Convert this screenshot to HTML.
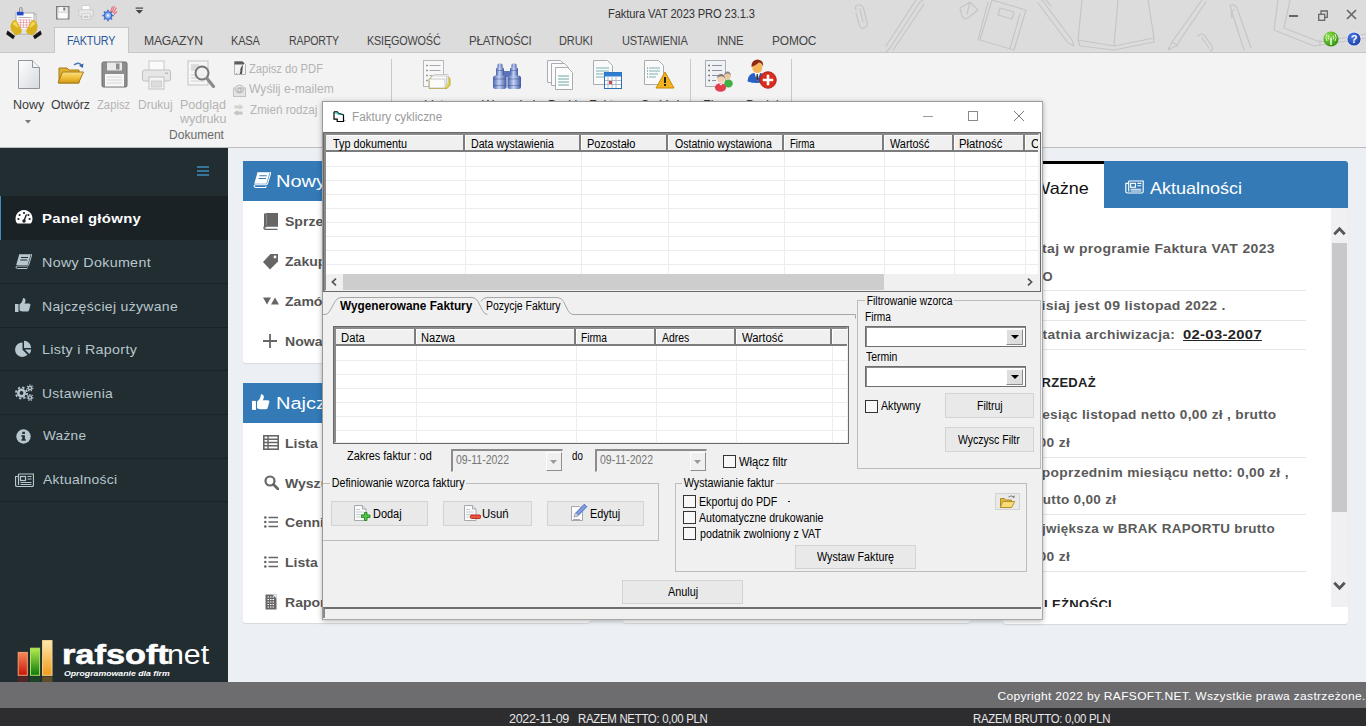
<!DOCTYPE html>
<html><head><meta charset="utf-8">
<style>
html,body{margin:0;padding:0;}
body{width:1366px;height:726px;overflow:hidden;position:relative;background:#ecf0f5;font-family:"Liberation Sans",sans-serif;}
.a{position:absolute;white-space:nowrap;}
/* ribbon */
#top{left:0;top:0;width:1366px;height:52px;background:#dcdcdc;}
#rib{left:0;top:52px;width:1366px;height:96px;background:#f3f3f3;border-top:1px solid #c6c6c6;border-bottom:1px solid #bdbdbd;box-sizing:border-box;}
.mt{top:34px;font-size:12.5px;color:#444;letter-spacing:-0.2px;line-height:14px;}
.rl{font-size:12.5px;color:#3a3a3a;line-height:14px;text-align:center;}
.dis{color:#b4b4b4;}
/* sidebar */
#side{left:0;top:148px;width:228px;height:534px;background:#222d32;}
.si{left:0;width:228px;height:44px;border-bottom:1px solid #1c2529;box-sizing:border-box;}
.st{font-size:13.5px;color:#b8c7ce;line-height:16px;letter-spacing:0.3px;}
/* panels */
.ph{background:#337ab7;}
.pb{background:#fff;border-radius:0 0 3px 3px;box-shadow:0 1px 1px rgba(0,0,0,.1);}
.pt{font-size:12px;font-weight:bold;color:#555;line-height:16px;transform:scaleX(1.17);transform-origin:0 0;}
.rt{font-size:13px;font-weight:bold;color:#5a5a5a;letter-spacing:0.3px;line-height:16px;text-align:right;}
.hr{height:1px;background:#e6e6e6;left:1000px;width:306px;}
/* footer */
#foot{left:0;top:682px;width:1366px;height:26px;background:#6d6d70;}
#stat{left:0;top:708px;width:1366px;height:18px;background:#2d2d30;}
/* dialog */
#dlg{left:322px;top:101px;width:721px;height:518.500px;background:#f0f0f0;box-shadow:0 1px 5px rgba(0,0,0,.30);}
.d{font-size:12px;color:#000;line-height:13px;}
.btn{background:#e9e9e9;border:1px solid #d3d3d3;box-sizing:border-box;text-align:center;}
.cb{width:13px;height:13px;background:#f8f8f8;border:1px solid #333;box-sizing:border-box;}
.gb{border:1px solid #bdbdbd;box-sizing:border-box;}
.gl{background:#f0f0f0;padding:0 2px;}
.hc{top:0;height:16px;background:#f0f0f0;border-right:2px solid #8c8c8c;box-sizing:border-box;box-shadow:inset 1px 1px 0 #fff;}
</style></head><body>
<!--TOP-->

<div class="a" id="top">
 <!-- sketch decoration -->
 <svg class="a" style="left:820px;top:0" width="546" height="52" viewBox="0 0 546 52" fill="none" stroke="#c6c6c6" stroke-width="1.200" stroke-linecap="round" stroke-linejoin="round">
  <path d="M36 10 q-2-5 3-5 q4 0 5 5 l3 12 q1 5-3 6 q-4 1-5-4 l-3-11 M40 9 l3 13"/>
  <path d="M100 2 l-30 46 l-4 4 M96 0 l-30 46 M104 4 l-31 46 M100 2 l3-2"/>
  <path d="M140 8 l10-6 l8 8 l-10 8 q-4 2-6-2 z M150 2 l-3 12"/>
  <path d="M172 0 l34 10 l-12 40 l-34-10 z M168 2 l-10 38 M180 8 l14 4 l-2 7 l-14-4 z M200 14 l-10 34"/>
  <path d="M222 0 l30 40 l2 6 l-6-3 l-30-40 M226 0 l5 6"/>
  <path d="M262 0 l-4 40 l36 6 l40-8 l-6-38 M298 0 l-4 46 M258 40 l2 6 l34 4 l40-8 l0-4"/>
  <path d="M382 0 l-30 42 l-4 8 l8-4 l30-44 M352 42 l6 4"/>
  <path d="M378 36 q4-4 7 0 l7 10 q2 4-2 5 M382 38 l7 10"/>
  <path d="M410 6 q4-3 7 2 l14 40 M410 6 l14 44 M414 10 q-4 2-2 8"/>
  <path d="M458 0 l-4 30 l40 16 l52-8 M470 0 l-6 28 l36 14 l46-8 M500 46 l0-6"/>
 </svg>
 <!-- app icon -->
 <svg class="a" style="left:6px;top:6px" width="36" height="34" viewBox="0 0 36 34">
  <rect x="12.500" y="8" width="17.500" height="19" fill="#f0f0f0" stroke="#a8a8a8" stroke-width=".8"/>
  <rect x="10" y="7" width="18" height="21" fill="#fcfcfc" stroke="#9c9c9c" stroke-width=".8"/>
  <path d="M13.500 5.800v-3q0-1.300 1.300-1.300t1.300 1.300v3" fill="none" stroke="#8a8a8a" stroke-width="1"/>
  <rect x="11" y="5.800" width="6.500" height="3.600" fill="#2346cf"/>
  <path d="M12.500 11.500h13" stroke="#aaa" stroke-width=".9"/>
  <path d="M12 14h14M12 16.500h14M12 19h14M12 21.500h14M14.500 13.500v8.500M17.500 13.500v8.500M20.500 13.500v8.500M23.500 13.500v8.500" stroke="#e59aa8" stroke-width=".7"/>
  <path d="M12 24h14M12 26h10" stroke="#bbb" stroke-width=".8"/>
  <path d="M5 24q-1.500-6 2-9q2.500-2 4 .5l4.500 8q1 3-2 4.500l-4 1.500z" fill="#d9b11c"/>
  <path d="M6.500 18q1.500-3 3.500-2l3 6q-3-1-6.500-4z" fill="#f2d65a"/>
  <path d="M31 24q1.500-6-2-9q-2.500-2-4 .5l-4.500 8q-1 3 2 4.500l4 1.500z" fill="#d9b11c"/>
  <path d="M29.500 18q-1.500-3-3.500-2l-3 6q3-1 6.500-4z" fill="#f2d65a"/>
  <path d="M1.500 24.500l7.500 5.500-1.800 3.200-7-5z" fill="#141414"/>
  <path d="M34.500 24.500l-7.500 5.500 1.800 3.200 7-5z" fill="#141414"/>
 </svg>
 <!-- quick access -->
 <svg class="a" style="left:55.500px;top:6px" width="14" height="14" viewBox="0 0 14 14"><rect x=".6" y=".6" width="12.300" height="12.300" fill="#dcdcdc" stroke="#7d7d7d" stroke-width="1.200"/><rect x="3" y="1" width="7.500" height="4.500" fill="#f6f6f6"/><rect x="7.300" y="1.500" width="2" height="3" fill="#7d7d7d"/><rect x="2.300" y="7" width="9" height="5.500" fill="#fafafa"/></svg>
 <svg class="a" style="left:78px;top:5px" width="16" height="15" viewBox="0 0 16 15"><rect x="4" y=".6" width="8" height="5" fill="#fdfdfd" stroke="#c9c9c9" stroke-width=".8"/><rect x=".8" y="4.800" width="14.400" height="6.500" rx="1.300" fill="#e9e9e9" stroke="#c2c2c2" stroke-width=".8"/><rect x="4" y="8.800" width="8" height="5.400" fill="#fbfbfb" stroke="#c2c2c2" stroke-width=".8"/><rect x="5.500" y="10.500" width="5" height="2.500" fill="#c9c9c9"/></svg>
 <svg class="a" style="left:102px;top:5px" width="16" height="17" viewBox="0 0 16 17"><circle cx="6" cy="10.500" r="3.600" fill="#8fb4ee" stroke="#3d6fd0" stroke-width="1.400"/><path d="M6 4.800v2M6 14.200v2M.3 10.500h2M9.700 10.500h2M2 6.500l1.400 1.400M8.600 13.100l1.400 1.400M10 6.500l-1.400 1.400M3.400 13.100l-1.400 1.400" stroke="#3d6fd0" stroke-width="1.600"/><circle cx="6" cy="10.500" r="1.300" fill="#e8eefc"/><path d="M8.500 7l2-5.500M10 7.500l2.500-6.500M11.500 8l3-5.500M12 9.500l3-3" stroke="#ee6a7c" stroke-width="1.100"/></svg>
 <svg class="a" style="left:135px;top:7px" width="9" height="8" viewBox="0 0 9 8"><rect x=".6" y=".5" width="7.500" height="1.200" fill="#444"/><path d="M.8 3h7.200L4.400 6.800z" fill="#444"/></svg>
 <div class="a" style="left:608.4px;top:7px;font-size:12px;color:#333;line-height:14px;letter-spacing:-0.12px;transform:scaleX(0.9287);transform-origin:0 0" id="ttl">Faktura VAT 2023 PRO 23.1.3</div>
 <!-- window controls -->
 <div class="a" style="left:1289px;top:14.800px;width:9px;height:2px;background:#666"></div>
 <svg class="a" style="left:1318px;top:10px" width="10" height="11" viewBox="0 0 10 11" fill="none" stroke="#666" stroke-width="1.300"><rect x=".7" y="4.300" width="6" height="6"/><path d="M3 4V1h6.300v6.300H7"/></svg>
 <svg class="a" style="left:1346px;top:8.500px" width="11" height="11" viewBox="0 0 11 11" stroke="#666" stroke-width="1.600"><path d="M1 1l9 9M10 1l-9 9"/></svg>
 <!-- tab -->
 
 <div class="a mt" style="left:143.7px;transform:scaleX(0.9729);transform-origin:0 0" id="m1">MAGAZYN</div>
 <div class="a mt" style="left:230.5px;transform:scaleX(0.8812);transform-origin:0 0" id="m2">KASA</div>
 <div class="a mt" style="left:288.5px;transform:scaleX(0.8483);transform-origin:0 0" id="m3">RAPORTY</div>
 <div class="a mt" style="left:367.4px;transform:scaleX(0.8675);transform-origin:0 0" id="m4">KSIĘGOWOŚĆ</div>
 <div class="a mt" style="left:469.1px;transform:scaleX(0.9182);transform-origin:0 0" id="m5">PŁATNOŚCI</div>
 <div class="a mt" style="left:559.3px;transform:scaleX(0.8861);transform-origin:0 0" id="m6">DRUKI</div>
 <div class="a mt" style="left:622.2px;transform:scaleX(0.8822);transform-origin:0 0" id="m7">USTAWIENIA</div>
 <div class="a mt" style="left:717.1px;transform:scaleX(0.9107);transform-origin:0 0" id="m8">INNE</div>
 <div class="a mt" style="left:772.4px;transform:scaleX(0.9556);transform-origin:0 0" id="m9">POMOC</div>
 <!-- green / help icons -->
 <svg class="a" style="left:1323px;top:31px" width="16" height="16" viewBox="0 0 16 16"><defs><radialGradient id="gg" cx=".35" cy=".3" r=".8"><stop offset="0" stop-color="#8ee04a"/><stop offset="1" stop-color="#2c8a10"/></radialGradient><radialGradient id="gh" cx=".35" cy=".3" r=".8"><stop offset="0" stop-color="#4a78e0"/><stop offset="1" stop-color="#1c3ea8"/></radialGradient></defs><circle cx="8" cy="8" r="7.600" fill="url(#gg)"/><path d="M8 14V6.500" stroke="#eaffd8" stroke-width="1.500"/><path d="M5.800 8.500q-1.200-2 0-4M10.200 8.500q1.200-2 0-4M4 10q-2.200-3.500 0-7M12 10q2.200-3.500 0-7" stroke="#dcf7c4" stroke-width="1" fill="none"/></svg>
 <svg class="a" style="left:1346px;top:31px" width="16" height="16" viewBox="0 0 16 16"><circle cx="8" cy="8" r="7.600" fill="#e8ecf8"/><circle cx="8" cy="8" r="6.600" fill="url(#gh)"/><text x="8" y="12" font-family="Liberation Sans" font-weight="bold" font-size="11" fill="#fff" text-anchor="middle">?</text></svg>
</div>


<div class="a" id="rib">
 <!-- Nowy -->
 <svg class="a" style="left:17px;top:6px" width="24" height="31" viewBox="0 0 24 31"><defs><linearGradient id="gp" x1="0" y1="0" x2="1" y2="1"><stop offset="0" stop-color="#ffffff"/><stop offset="1" stop-color="#d5d9de"/></linearGradient></defs><path d="M1.5 1.5h14l7 7v21h-21z" fill="url(#gp)" stroke="#8f959b"/><path d="M15.5 1.5v7h7" fill="#f4f4f4" stroke="#8f959b"/></svg>
 <div class="a rl" style="left:13.0px;top:45px;" id="r0">Nowy</div>
 <svg class="a" style="left:25px;top:67px" width="6" height="4" viewBox="0 0 6 4"><path d="M0 0h6l-3 3.5z" fill="#777"/></svg>
 <!-- Otworz -->
 <svg class="a" style="left:57px;top:7px" width="28" height="26" viewBox="0 0 28 26"><defs><linearGradient id="gf" x1="0" y1="0" x2="0" y2="1"><stop offset="0" stop-color="#fbe089"/><stop offset=".5" stop-color="#f1c13c"/><stop offset="1" stop-color="#d39a1a"/></linearGradient></defs><path d="M2 8h8l2 2h10v13H2z" fill="#e0b030" stroke="#a67c14"/><path d="M1 23l4.500-11h21l-5 11z" fill="url(#gf)" stroke="#a67c14"/><path d="M17 5q5-4 8 1" fill="none" stroke="#4a78b8" stroke-width="1.600"/><path d="M26.500 3.500l-.7 4.500-3.800-2.200z" fill="#3a64a8"/></svg>
 <div class="a rl" style="left:51.4px;top:45px;transform:scaleX(0.9856);transform-origin:0 0" id="r1">Otwórz</div>
 <!-- Zapisz -->
 <svg class="a" style="left:101px;top:8px" width="27" height="27" viewBox="0 0 27 27"><rect x="1" y="1" width="25" height="25" rx="1.5" fill="#8d8d8d" stroke="#6f6f6f"/><rect x="6" y="1.5" width="15" height="8" fill="#e9e9e9"/><rect x="15" y="2.5" width="3.5" height="6" fill="#8d8d8d"/><rect x="4" y="13" width="19" height="12.5" fill="#f7f7f7"/><path d="M6 16h15M6 19h15M6 22h15" stroke="#d6d6d6"/></svg>
 <div class="a rl dis" style="left:97.4px;top:45px;transform:scaleX(0.9000);transform-origin:0 0" id="r2">Zapisz</div>
 <!-- Drukuj -->
 <svg class="a" style="left:141px;top:7px" width="31" height="30" viewBox="0 0 31 30"><rect x="8" y="1" width="15" height="10" fill="#fafafa" stroke="#c8c8c8"/><rect x="1.5" y="10" width="28" height="11" rx="2" fill="#e6e6e6" stroke="#c0c0c0"/><rect x="8" y="17" width="15" height="12" fill="#f4f4f4" stroke="#c0c0c0"/><rect x="10.5" y="21" width="10" height="6" fill="#ddd" stroke="#bbb" stroke-width=".6"/><rect x="24" y="12.5" width="3" height="1.5" fill="#bbb"/></svg>
 <div class="a rl dis" style="left:138.1px;top:45px;transform:scaleX(0.9600);transform-origin:0 0" id="r3">Drukuj</div>
 <!-- Podglad -->
 <svg class="a" style="left:187px;top:7px" width="29" height="30" viewBox="0 0 29 30"><rect x="1" y="1" width="20" height="24" fill="#f6f6f6" stroke="#c4c4c4"/><rect x="4" y="4" width="8" height="7" fill="#dcdcdc"/><path d="M4 15h14M4 18h14M4 21h14" stroke="#d0d0d0"/><circle cx="15" cy="13" r="6.5" fill="#f1f1f1" fill-opacity=".8" stroke="#777" stroke-width="2"/><path d="M20 18.5l6.5 8" stroke="#8a8a8a" stroke-width="3.2" stroke-linecap="round"/></svg>
 <div class="a rl dis" style="left:180px;top:45px;width:44px;" id="r4">Podgląd<br>wydruku</div>
 <div class="a rl" style="left:169.3px;top:75px;color:#6a6a6a;transform:scaleX(0.9643);transform-origin:0 0" id="r5">Dokument</div>
 <!-- small buttons -->
 <svg class="a" style="left:233.500px;top:8px" width="12" height="14" viewBox="0 0 12 14"><path d="M.5.500h8l3 3v10h-11z" fill="#f4f4f4" stroke="#b5b5b5"/><path d="M.5.500h8l1.500 1.500v1.500h-9.500z" fill="#5c5c5c"/><path d="M1 13q4.500-1.500 6-6.500q.5-2 2-2.500q-.5 5-1 9h-2.500q1-2.500 1-4.500q-2 3.500-5.500 4.500z" fill="#555"/></svg>
 <div class="a rl dis" style="left:249.4px;top:9px;transform:scaleX(0.8951);transform-origin:0 0" id="s0">Zapisz do PDF</div>
 <svg class="a" style="left:232.500px;top:30.500px" width="13" height="13" viewBox="0 0 13 13"><rect x=".5" y="4" width="12" height="8.5" fill="#e4e4e4" stroke="#c2c2c2"/><circle cx="6.5" cy="5" r="4" fill="#ececec" stroke="#bbb"/><text x="6.5" y="7.5" font-size="6.5" font-family="Liberation Sans" fill="#999" text-anchor="middle">@</text></svg>
 <div class="a rl dis" style="left:249.4px;top:29px;transform:scaleX(0.9701);transform-origin:0 0" id="s1">Wyślij e-mailem</div>
 <svg class="a" style="left:233px;top:51px" width="11" height="12" viewBox="0 0 11 12"><path d="M1.500 1.500h5V0l4 3-4 3V4.500h-5z" fill="#d2d2d2"/><path d="M9.500 7.500h-5V6l-4 3 4 3v-1.500h5z" fill="#c4c4c4"/></svg>
 <div class="a rl dis" style="left:249.6px;top:49.5px;transform:scaleX(0.9333);transform-origin:0 0" id="s2">Zmień rodzaj</div>
 <div class="a" style="left:391px;top:6px;width:1px;height:82px;background:#c9c9c9"></div>
 <!-- list icon -->
 <svg class="a" style="left:421px;top:6px" width="31" height="32" viewBox="0 0 31 32"><rect x="2.500" y="1.500" width="20" height="26" fill="#f8f8f8" stroke="#b4b8bd"/><path d="M8.500 6.500h11M8.500 11.500h11M8.500 16.500h6" stroke="#a4aab0"/><path d="M5.500 6.500h1M5.500 11.500h1M5.500 16.500h1M5.500 21.500h1" stroke="#444" stroke-width="1.300"/>
 <path d="M8 29.500v-9l3-3.500h15l3 2.500v6.500l-3 3.500z" fill="#e3d64e" stroke="#b5a52e" stroke-width=".9"/><path d="M11 17.500l2-2h14v9" fill="#fafafa" stroke="#c2c2c2" stroke-width=".8"/><path d="M9.500 19l2-2h14v9l-2 2" fill="#fdfdfd" stroke="#c2c2c2" stroke-width=".8"/><rect x="8.500" y="20" width="15.500" height="9" fill="#fbfbfb" stroke="#bdbdbd" stroke-width=".8"/></svg>
 <!-- binoculars -->
 <svg class="a" style="left:492px;top:10px" width="30" height="27" viewBox="0 0 30 27"><defs><linearGradient id="gb" x1="0" y1="0" x2="1" y2="0"><stop offset="0" stop-color="#4862ac"/><stop offset=".45" stop-color="#c6d2f2"/><stop offset="1" stop-color="#3f58a4"/></linearGradient></defs>
 <rect x="11" y="8" width="8" height="6" fill="#5b74b8"/>
 <rect x="5.500" y=".5" width="5" height="5" rx="1.500" fill="url(#gb)"/><rect x="4" y="4.500" width="8" height="9" rx="1.500" fill="url(#gb)"/><rect x="1" y="12.500" width="13.500" height="13.500" rx="2.500" fill="url(#gb)"/>
 <rect x="19.500" y=".5" width="5" height="5" rx="1.500" fill="url(#gb)"/><rect x="18" y="4.500" width="8" height="9" rx="1.500" fill="url(#gb)"/><rect x="15.500" y="12.500" width="13.500" height="13.500" rx="2.500" fill="url(#gb)"/>
 <path d="M1.500 16h12.500M16 16h12.500M1.500 22.500h12.500M16 22.500h12.500M4.500 7.500h7M18.500 7.500h7" stroke="#3a519a" stroke-width=".7" opacity=".7"/></svg>
 <!-- docs -->
 <svg class="a" style="left:546px;top:6px" width="28" height="32" viewBox="0 0 28 32"><path d="M1.5 1.5h13l4 4v18h-17z" fill="#fafafa" stroke="#a8adb3"/><path d="M5.5 4.500h13l4 4v18h-17z" fill="#fafafa" stroke="#a8adb3"/><path d="M9.500 8.500h12l5 5v17h-17z" fill="#fdfdfd" stroke="#a8adb3"/><path d="M12 17h11M12 20h11M12 23h11M12 26h11" stroke="#6fa8a8"/></svg>
 <!-- doc+calendar -->
 <svg class="a" style="left:592px;top:6px" width="31" height="32" viewBox="0 0 31 32"><path d="M1.5 1.5h14l5 5v19h-19z" fill="#fafafa" stroke="#a8adb3"/><path d="M4 9h13M4 12h13M4 15h8M4 18h8" stroke="#7fb0b0"/><rect x="12.500" y="13.500" width="17" height="16" fill="#fff" stroke="#2f6fb5"/><rect x="12.500" y="13.500" width="17" height="4" fill="#2f7ed0"/><path d="M16 18v11M20 18v11M24 18v11M13 21.500h16M13 25.500h16" stroke="#9ab" stroke-width=".8"/><rect x="17" y="22" width="3" height="3" fill="#d8404a"/></svg>
 <!-- doc+warning -->
 <svg class="a" style="left:643px;top:6px" width="32" height="32" viewBox="0 0 32 32"><path d="M1.5 1.5h14l5 5v19h-19z" fill="#fafafa" stroke="#a8adb3"/><path d="M6 9h11M6 12h11M6 15h9M6 18h7" stroke="#7fb0b0"/><path d="M4 9h1M4 12h1M4 15h1M4 18h1" stroke="#666"/><path d="M22 13l9 16H13z" fill="#f2b21c" stroke="#c88a0a"/><rect x="21" y="18" width="2" height="6" fill="#222"/><rect x="21" y="25" width="2" height="2" fill="#222"/></svg>
 <div class="a" style="left:690px;top:6px;width:1px;height:82px;background:#c9c9c9"></div>
 <!-- doc+people -->
 <svg class="a" style="left:703px;top:7px" width="32" height="32" viewBox="0 0 32 32"><rect x="2.500" y=".5" width="20" height="26" fill="#f0f1f5" stroke="#a9aeb6"/><path d="M9 5.500h10M9 10.500h10M9 15.500h7M9 20.500h4" stroke="#7d8794" stroke-width=".9"/><path d="M5.500 5.500h1.200M5.500 10.500h1.200M5.500 15.500h1.200M5.500 20.500h1.200" stroke="#333" stroke-width="1.300"/>
 <circle cx="24.500" cy="16" r="3.300" fill="#f0c8a0"/><path d="M21 15.500q.5-4 3.500-4t3.500 4q-1.500-2-3.500-2t-3.500 2z" fill="#8a8a8a"/><ellipse cx="25.500" cy="23.500" rx="4.300" ry="4" fill="#3fb043"/>
 <circle cx="18" cy="19" r="3.600" fill="#f4d0b0"/><path d="M14 18.500q.5-4.500 4-4.500t4 4.500q-1.500-2.200-4-2.200t-4 2.200z" fill="#7a7a7a"/><ellipse cx="17.500" cy="27.500" rx="5.600" ry="4.300" fill="#e0404e"/><path d="M16 23.500l2 2 2-2z" fill="#fff"/></svg>
 <!-- person+plus -->
 <svg class="a" style="left:745px;top:5px" width="34" height="32" viewBox="0 0 34 32"><path d="M2.500 23.500q.5-7.500 6-8.500h7q5.500 1 6 8.500q-9.500 3-19 0z" fill="#2860c4"/><path d="M9.500 15l2.800 8 2.800-8z" fill="#fff"/><path d="M11.700 16h1.200l.6 5-1.200 1.500-1.200-1.500z" fill="#333"/><ellipse cx="12.300" cy="9.500" rx="5" ry="5.600" fill="#f6b45c"/><path d="M6.500 9q-.5-7 6-7.500q6.500.5 5.500 7q-1-3.500-4-4q-4 3.500-7.500 4.500z" fill="#8e2a12"/>
 <circle cx="23" cy="22" r="8.300" fill="#d82c1e"/><circle cx="23" cy="22" r="8.300" fill="none" stroke="#a8180c" stroke-width=".8"/><path d="M23 16.800v10.400M17.800 22h10.400" stroke="#fff" stroke-width="2.600"/></svg>
 <div class="a rl" style="left:424px;top:45px;" >Lista</div>
 <div class="a rl" style="left:482px;top:45px;" >Wyszukaj</div>
 <div class="a rl" style="left:548px;top:45px;" >Druki</div>
 <div class="a rl" style="left:589px;top:45px;" >Faktury</div>
 <div class="a rl" style="left:641px;top:45px;" >Spóźnione</div>
 <div class="a rl" style="left:703px;top:45px;" >Firmy</div>
 <div class="a rl" style="left:746px;top:45px;" >Dodaj</div>
 <div class="a" style="left:791px;top:6px;width:1px;height:82px;background:#c9c9c9"></div>
</div>

<div class="a" style="left:54px;top:27px;width:75px;height:26px;background:#f3f3f3;border:1px solid #c6c6c6;border-bottom:none;box-sizing:border-box;"></div>
<div class="a mt" style="left:66.8px;color:#2b579a;transform:scaleX(0.8618);transform-origin:0 0" id="m0">FAKTURY</div>
<!--SIDEBAR-->

<div class="a" id="side">
 <svg class="a" style="left:197px;top:18px" width="12" height="10" viewBox="0 0 12 10"><path d="M0 1h12M0 5h12M0 9h12" stroke="#3c8dbc" stroke-width="1.6"/></svg>
 <div class="a si" style="top:48px;background:#1a2226;border-left:1px solid #3c8dbc;height:44px;border-bottom:none"></div>
 <div class="a" style="left:0;top:135.1px;width:228px;height:1px;background:#1a2327"></div>
 <div class="a" style="left:0;top:178.7px;width:228px;height:1px;background:#1a2327"></div>
 <div class="a" style="left:0;top:222.3px;width:228px;height:1px;background:#1a2327"></div>
 <div class="a" style="left:0;top:265.9px;width:228px;height:1px;background:#1a2327"></div>
 <div class="a" style="left:0;top:309.5px;width:228px;height:1px;background:#1a2327"></div>
 <div class="a" style="left:0;top:353.1px;width:228px;height:1px;background:#1a2327"></div>
 <!-- icons -->
 <svg class="a" style="left:15px;top:61px" width="18" height="16" viewBox="0 0 18 16"><path d="M9 1a8.500 8.500 0 0 0-7.400 12.700q.4.800 1.200.8h12.400q.8 0 1.200-.8A8.500 8.500 0 0 0 9 1z" fill="#fff"/><circle cx="9" cy="4" r="1.100" fill="#1a2226"/><circle cx="4.600" cy="6" r="1.100" fill="#1a2226"/><circle cx="13.400" cy="6" r="1.100" fill="#1a2226"/><circle cx="3.400" cy="10" r="1.100" fill="#1a2226"/><circle cx="14.600" cy="10" r="1.100" fill="#1a2226"/><path d="M9 12l2.200-6" stroke="#1a2226" stroke-width="1.400" stroke-linecap="round"/><circle cx="9" cy="12" r="1.700" fill="#1a2226"/></svg>
 <svg class="a" style="left:15px;top:106px" width="17" height="15" viewBox="0 0 17 15"><path d="M4 0h12q1 0 .7 1l-3 10q-.3 1-1.300 1H2.500q-1.500 0-1.500 1.200T2.500 14.500H12l.5-1" fill="none" stroke="#b8c7ce" stroke-width="1"/><path d="M4.200.5h11.500l-3 10.500H1.200z" fill="#b8c7ce"/><path d="M6 3.500h7M5.300 6h7" stroke="#222d32" stroke-width="1"/></svg>
 <svg class="a" style="left:15px;top:149px" width="16" height="16" viewBox="0 0 16 16"><path d="M0 7h3.500v8H0z" fill="#b8c7ce"/><path d="M4.500 7.500q3-2 3.500-6.500q2.500 0 2.500 2.500q0 1.500-1 3H14q1.500 0 1.500 1.500q0 1-.8 1.400q.6 1-.3 1.800q.4 1-.5 1.700q.2 1.600-1.400 1.600H8q-2 0-3.500-1z" fill="#b8c7ce"/></svg>
 <svg class="a" style="left:15px;top:192px" width="17" height="17" viewBox="0 0 17 17"><path d="M7.500 2.500v7.200l5 5a7.200 7.200 0 1 1-5-12.200z" fill="#b8c7ce"/><path d="M9 .8a7.200 7.200 0 0 1 7.200 7.200H9z" fill="#b8c7ce"/><path d="M9.800 9.500h6.400a7.200 7.200 0 0 1-1.900 4.500z" fill="#b8c7ce"/></svg>
 <svg class="a" style="left:15px;top:236px" width="19" height="17" viewBox="0 0 19 17"><circle cx="6.500" cy="9" r="3.200" fill="none" stroke="#b8c7ce" stroke-width="2.600"/><circle cx="6.500" cy="9" r="5.600" fill="none" stroke="#b8c7ce" stroke-width="1.800" stroke-dasharray="2.300 2.100"/><circle cx="15" cy="4" r="1.600" fill="none" stroke="#b8c7ce" stroke-width="1.400"/><circle cx="15" cy="4" r="2.900" fill="none" stroke="#b8c7ce" stroke-width="1.100" stroke-dasharray="1.300 1.200"/><circle cx="15" cy="13.500" r="1.600" fill="none" stroke="#b8c7ce" stroke-width="1.400"/><circle cx="15" cy="13.500" r="2.900" fill="none" stroke="#b8c7ce" stroke-width="1.100" stroke-dasharray="1.300 1.200"/></svg>
 <svg class="a" style="left:16px;top:281px" width="15" height="15" viewBox="0 0 15 15"><circle cx="7.500" cy="7.500" r="7.200" fill="#b8c7ce"/><rect x="6.300" y="6.300" width="2.600" height="5" fill="#222d32"/><rect x="5.300" y="6.300" width="2" height="1.300" fill="#222d32"/><rect x="5.300" y="10.300" width="4.600" height="1.300" fill="#222d32"/><rect x="6.300" y="2.800" width="2.600" height="2.200" fill="#222d32"/></svg>
 <svg class="a" style="left:15px;top:325px" width="19" height="14" viewBox="0 0 19 14"><path d="M3.500 1h15v11q0 1.500-1.500 1.500H2.500Q.5 13.500.5 12V3.500h3" fill="none" stroke="#b8c7ce" stroke-width="1.200"/><rect x="5.500" y="3.500" width="5" height="4" fill="none" stroke="#b8c7ce" stroke-width="1.200"/><path d="M12.500 3.500h4M12.500 6h4M5.500 9.500h11M5.500 11.500h11" stroke="#b8c7ce" stroke-width="1.100"/><path d="M3.500 1v11" stroke="#b8c7ce" stroke-width="1.200"/></svg>
 <div class="a st" style="left:42.2px;top:62.5px;color:#fff;font-weight:bold;transform:scaleX(1.1041);transform-origin:0 0" id="n0">Panel główny</div>
 <div class="a st" style="left:42.0px;top:106.5px;transform:scaleX(1.0582);transform-origin:0 0" id="n1">Nowy Dokument</div>
 <div class="a st" style="left:42.0px;top:150.5px;transform:scaleX(1.0387);transform-origin:0 0" id="n2">Najczęściej używane</div>
 <div class="a st" style="left:42.2px;top:193.5px;transform:scaleX(1.0566);transform-origin:0 0" id="n3">Listy i Raporty</div>
 <div class="a st" style="left:42.0px;top:237.5px;transform:scaleX(1.0297);transform-origin:0 0" id="n4">Ustawienia</div>
 <div class="a st" style="left:43.0px;top:280.0px;transform:scaleX(1.0049);transform-origin:0 0" id="n5">Ważne</div>
 <div class="a st" style="left:43.0px;top:324.1px;transform:scaleX(1.0289);transform-origin:0 0" id="n6">Aktualności</div>
 <!-- logo -->
 <svg class="a" style="left:15px;top:489px" width="42" height="46" viewBox="0 0 42 46"><defs>
 <linearGradient id="lr" x1="0" y1="0" x2="0" y2="1"><stop offset="0" stop-color="#f58a58"/><stop offset="1" stop-color="#c81408"/></linearGradient>
 <linearGradient id="lg" x1="0" y1="0" x2="0" y2="1"><stop offset="0" stop-color="#b4ec4c"/><stop offset="1" stop-color="#0c7a0c"/></linearGradient>
 <linearGradient id="lo" x1="0" y1="0" x2="0" y2="1"><stop offset="0" stop-color="#ffe9b0"/><stop offset="1" stop-color="#f09a18"/></linearGradient></defs>
 <rect x="3.200" y="15.400" width="9.100" height="22.900" fill="url(#lr)" stroke="#f7a070" stroke-width="1"/>
 <rect x="15.500" y="11.200" width="9.100" height="27.100" fill="url(#lg)" stroke="#b0e060" stroke-width="1"/>
 <rect x="27.600" y="3.600" width="9.400" height="34.700" fill="url(#lo)" stroke="#ffd890" stroke-width="1"/>
 <rect x="2.700" y="39.500" width="10" height="6" fill="#c81408" opacity=".3"/><rect x="15" y="39.500" width="10" height="6" fill="#0c7a0c" opacity=".3"/><rect x="27.100" y="39.500" width="10.400" height="6" fill="#f09a18" opacity=".3"/></svg>
 <div class="a" style="left:61.9px;top:489.600px;font-size:27.5px;font-weight:bold;color:#fff;line-height:34px;-webkit-text-stroke:.6px #fff;transform:scaleX(1.2482);transform-origin:0 0" id="lg1">rafsoft</div>
 <div class="a" style="left:167.4px;top:489.600px;font-size:27.5px;color:#fff;line-height:34px;transform:scaleX(1.1033);transform-origin:0 0" id="lg3">net</div>
 <div class="a" style="left:64.0px;top:520.600px;font-size:8px;font-weight:bold;font-style:italic;color:#fff;line-height:10px;transform:scaleX(1.0908);transform-origin:0 0" id="lg2">Oprogramowanie dla firm</div>
</div>
</div>


<!-- left panels -->
<div class="a ph" style="left:243px;top:161px;width:347px;height:40.4px"></div>
<div class="a pb" style="left:243px;top:201.4px;width:347px;height:162px"></div>
<div class="a ph" style="left:243px;top:382.7px;width:347px;height:40.4px"></div>
<div class="a pb" style="left:243px;top:423.1px;width:347px;height:199.5px"></div>
<div class="a pb" style="left:623px;top:200px;width:347px;height:422.600px;border-radius:3px"></div>
<svg class="a" style="left:253px;top:172px" width="18" height="16" viewBox="0 0 17 15"><path d="M4 0h12q1 0 .7 1l-3 10q-.3 1-1.300 1H2.500q-1.500 0-1.500 1.200T2.500 14.500H12l.5-1" fill="none" stroke="#fff" stroke-width="1"/><path d="M4.200.5h11.500l-3 10.500H1.200z" fill="#fff"/><path d="M6 3.500h7M5.300 6h7" stroke="#337ab7" stroke-width="1"/></svg>
<div class="a" style="left:276px;top:170.6px;font-size:16.8px;color:#fff;line-height:22px;transform:scaleX(1.19);transform-origin:0 0" id="ph1">Nowy Dokument</div>
<svg class="a" style="left:252px;top:393px" width="18" height="18" viewBox="0 0 16 16"><path d="M0 7h3.500v8H0z" fill="#fff"/><path d="M4.500 7.500q3-2 3.500-6.500q2.500 0 2.500 2.500q0 1.500-1 3H14q1.500 0 1.500 1.500q0 1-.8 1.400q.6 1-.3 1.800q.4 1-.5 1.700q.2 1.600-1.400 1.600H8q-2 0-3.500-1z" fill="#fff"/></svg>
<div class="a" style="left:276px;top:392.8px;font-size:16.8px;color:#fff;line-height:22px;transform:scaleX(1.19);transform-origin:0 0" id="ph2">Najczęściej</div>
<!-- left panel items -->
<svg class="a" style="left:263px;top:213px" width="15" height="17" viewBox="0 0 15 17"><path d="M3 .5h11.500v12.500H3Q1 13 1 14.700T3 16.400h11.500" fill="none" stroke="#666" stroke-width="1.400"/><rect x="3.500" y=".5" width="11" height="12.500" fill="#666"/><rect x="1" y=".5" width="2.500" height="14" fill="#666"/></svg>
<div class="a pt" style="left:285px;top:213.7px">Sprzedaż</div>
<svg class="a" style="left:262px;top:253px" width="17" height="17" viewBox="0 0 17 17"><path d="M8.500 1h7.500v7.500l-8 8L1 9z" fill="#666"/><circle cx="13" cy="4" r="1.400" fill="#fff"/></svg>
<div class="a pt" style="left:285px;top:253.7px">Zakup</div>
<svg class="a" style="left:263px;top:297px" width="16" height="8" viewBox="0 0 16 8"><path d="M0 .5h8L4 7.500z" fill="#666"/><path d="M8 7.500h8L12 .5z" fill="#666"/></svg>
<div class="a pt" style="left:285px;top:293.6px">Zamówienia</div>
<svg class="a" style="left:263px;top:334px" width="14" height="14" viewBox="0 0 14 14"><path d="M7 0v14M0 7h14" stroke="#666" stroke-width="1.800"/></svg>
<div class="a pt" style="left:285px;top:333.7px">Nowa</div>
<svg class="a" style="left:263px;top:435px" width="16" height="15" viewBox="0 0 16 15"><rect x=".8" y=".8" width="14.400" height="13.400" fill="none" stroke="#666" stroke-width="1.600"/><path d="M1 4.200h14M1 7.500h14M1 10.800h14M5 1v13" stroke="#666" stroke-width="1.400"/></svg>
<div class="a pt" style="left:285px;top:435.6px">Lista</div>
<svg class="a" style="left:264px;top:475px" width="15" height="15" viewBox="0 0 15 15"><circle cx="6" cy="6" r="4.500" fill="none" stroke="#666" stroke-width="2.200"/><path d="M9.500 9.500l4.500 4.500" stroke="#666" stroke-width="2.800" stroke-linecap="round"/></svg>
<div class="a pt" style="left:285px;top:475.5px">Wyszukaj</div>
<svg class="a" style="left:264px;top:516px" width="14" height="12" viewBox="0 0 14 12"><path d="M4.500 1.500H14M4.500 6H14M4.500 10.500H14" stroke="#666" stroke-width="1.600"/><circle cx="1.300" cy="1.500" r="1.300" fill="#666"/><circle cx="1.300" cy="6" r="1.300" fill="#666"/><circle cx="1.300" cy="10.500" r="1.300" fill="#666"/></svg>
<div class="a pt" style="left:285px;top:515.4px">Cennik</div>
<svg class="a" style="left:264px;top:556px" width="14" height="12" viewBox="0 0 14 12"><path d="M4.500 1.500H14M4.500 6H14M4.500 10.500H14" stroke="#666" stroke-width="1.600"/><circle cx="1.300" cy="1.500" r="1.300" fill="#666"/><circle cx="1.300" cy="6" r="1.300" fill="#666"/><circle cx="1.300" cy="10.500" r="1.300" fill="#666"/></svg>
<div class="a pt" style="left:285px;top:555.3px">Lista</div>
<svg class="a" style="left:265px;top:594px" width="12" height="16" viewBox="0 0 12 16"><rect x=".5" y=".5" width="11" height="15" fill="#666"/><path d="M2.500 3h7M2.500 5.500h7M2.500 8h7M2.500 10.500h7M2.500 13h7" stroke="#fff" stroke-width="1" stroke-dasharray="1.500 1"/><path d="M7.500.5h4v4z" fill="#ecf0f5"/></svg>
<div class="a pt" style="left:285px;top:595.2px">Raporty</div>
<!-- right panel -->
<div class="a pb" style="left:1003px;top:161px;width:345px;height:463px;border-radius:3px"></div>
<div class="a" style="left:1000px;top:161px;width:104px;height:3px;background:#000"></div>
<div class="a" style="left:1104px;top:161px;width:244px;height:46.700px;background:#337ab7;border-radius:0 3px 0 0"></div>
<div class="a" style="right:277.0px;top:177.700px;font-size:16.5px;color:#111;line-height:20px;transform:scaleX(1.0924);transform-origin:100% 0" id="wz">Ważne</div>
<svg class="a" style="left:1125px;top:180px" width="19" height="13.500" viewBox="0 0 19 14"><path d="M3.500 1h15v11q0 1.500-1.500 1.500H2.500Q.5 13.500.5 12V3.500h3" fill="none" stroke="#fff" stroke-width="1.200"/><rect x="5.500" y="3.500" width="5" height="4" fill="none" stroke="#fff" stroke-width="1.200"/><path d="M12.500 3.500h4M12.500 6h4M5.500 9.500h11M5.500 11.500h11" stroke="#fff" stroke-width="1.100"/><path d="M3.500 1v11" stroke="#fff" stroke-width="1.200"/></svg>
<div class="a" style="left:1150.0px;top:177.700px;font-size:16.5px;color:#fff;line-height:20px;transform:scaleX(1.0894);transform-origin:0 0" id="ak">Aktualności</div>
<!-- scrollbar -->
<div class="a" style="left:1331px;top:207.700px;width:17px;height:399px;background:#f0f0f2"></div>
<div class="a" style="left:1332px;top:243px;width:15px;height:268.600px;background:#c8c7ca"></div>
<svg class="a" style="left:1333px;top:225.500px" width="13" height="10" viewBox="0 0 13 10"><path d="M1.300 8.300l5.200-5.500 5.200 5.500" fill="none" stroke="#555" stroke-width="2.800"/></svg>
<svg class="a" style="left:1333.200px;top:580.500px" width="13" height="10" viewBox="0 0 13 10"><path d="M1.300 1.700l5.200 5.500 5.200-5.500" fill="none" stroke="#555" stroke-width="2.800"/></svg>
<div class="a" style="left:1000px;top:221px;width:331px;height:386px;overflow:hidden">
<div class="a" style="left:0;top:-221px;width:331px;height:726px">
 <div class="a rt" style="right:56.5px;top:240.9px;transform:scaleX(1.0753);transform-origin:100% 0" id="t0">Witaj w programie Faktura VAT 2023</div>
 <div class="a rt" style="right:278.0px;top:268.7px" id="t1">PRO</div>
 <div class="a hr" style="left:0;top:290px"></div>
 <div class="a rt" style="right:105.6px;top:297.5px;transform:scaleX(1.0763);transform-origin:100% 0" id="t2">Dzisiaj jest 09 listopad 2022 .</div>
 <div class="a hr" style="left:0;top:320px"></div>
 <div class="a rt" style="right:156.0px;top:327.4px;transform:scaleX(1.0586);transform-origin:100% 0" id="t3">Ostatnia archiwizacja:</div>
 <div class="a rt" style="left:182.6px;top:327.4px;color:#222;text-decoration:underline;text-align:left;transform:scaleX(1.1357);transform-origin:0 0" id="t3b">02-03-2007</div>
 <div class="a hr" style="left:0;top:349px"></div>
 <div class="a rt" style="right:235.0px;top:375.3px;color:#222" id="t4">SPRZEDAŻ</div>
 <div class="a rt" style="right:54.6px;top:407.4px;transform:scaleX(1.0486);transform-origin:100% 0" id="t5">Miesiąc listopad netto 0,00 zł , brutto</div>
 <div class="a rt" style="right:260.6px;top:434.7px;transform:scaleX(1.0619);transform-origin:100% 0" id="t6">0,00 zł</div>
 <div class="a hr" style="left:0;top:457px"></div>
 <div class="a rt" style="right:42.0px;top:464.7px;transform:scaleX(1.0584);transform-origin:100% 0" id="t7">W poprzednim miesiącu netto: 0,00 zł ,</div>
 <div class="a rt" style="right:214.6px;top:492.1px;transform:scaleX(1.0400);transform-origin:100% 0" id="t8">brutto 0,00 zł</div>
 <div class="a hr" style="left:0;top:514px"></div>
 <div class="a rt" style="right:56.4px;top:521.3px;transform:scaleX(1.0320);transform-origin:100% 0" id="t9">Największa w BRAK RAPORTU brutto</div>
 <div class="a rt" style="right:260.6px;top:549.1px;transform:scaleX(1.0619);transform-origin:100% 0" id="t10">0,00 zł</div>
 <div class="a hr" style="left:0;top:571px"></div>
 <div class="a rt" style="right:219px;top:596.7px;color:#222" id="t11">NALEŻNOŚCI</div>
</div></div>

<!--FOOTER-->

<div class="a" id="foot"><div class="a" style="right:0.4px;top:7px;font-size:11.5px;color:#fff;line-height:14px;letter-spacing:.3px;transform:scaleX(1.0442);transform-origin:100% 0" id="cp">Copyright 2022 by RAFSOFT.NET. Wszystkie prawa zastrzeżone.</div></div>
<div class="a" id="stat">
 <div class="a" style="left:508.6px;top:4px;font-size:12px;color:#e8e8e8;line-height:14px;letter-spacing:-.3px;transform:scaleX(1.0429);transform-origin:0 0" id="sb0">2022-11-09</div>
 <div class="a" style="left:577.8px;top:4px;font-size:12px;color:#e8e8e8;line-height:14px;letter-spacing:-.3px;transform:scaleX(0.9511);transform-origin:0 0" id="sb1">RAZEM NETTO: 0,00 PLN</div>
 <div class="a" style="left:973.4px;top:4px;font-size:12px;color:#e8e8e8;line-height:14px;letter-spacing:-.3px;transform:scaleX(0.9490);transform-origin:0 0" id="sb2">RAZEM BRUTTO: 0,00 PLN</div>
</div>

<!--DIALOG-->
<!--DLG-->
<div class="a" id="dlg">
<div class="a" style="left:1px;top:1px;width:719px;height:30px;background:#fff"></div>
<svg class="a" style="left:10.500px;top:9.500px" width="15" height="12" viewBox="0 0 15 12"><path d="M1 .8v7.400h3.200v2.300h6.300V3.600" fill="none" stroke="#000" stroke-width="1.200"/><path d="M1 .8h3.300l1 1.300" fill="none" stroke="#000" stroke-width="1.200"/><path d="M1.800 1.900l2.200 .1 1.200 1.200 5.300.4" fill="none" stroke="#35c8c8" stroke-width="1.300"/><path d="M5.300 2.300l5.200 1.300" fill="none" stroke="#000" stroke-width=".9"/><path d="M11.300 8.600l1.600.9-1.600.9z" fill="#999"/></svg>
<div class="a" style="left:29.8px;top:8.600px;font-size:12px;color:#9a9a9a;line-height:14px;transform:scaleX(0.9801);transform-origin:0 0" id="dt">Faktury cykliczne</div>
<div class="a" style="left:601px;top:15px;width:10px;height:1px;background:#9a9a9a"></div>
<div class="a" style="left:646px;top:10px;width:10px;height:10px;border:1px solid #8a8a8a;box-sizing:border-box"></div>
<svg class="a" style="left:692px;top:10px" width="10" height="10" viewBox="0 0 10 10"><path d="M0 0l10 10M10 0l-10 10" stroke="#7a7a7a" stroke-width="1"/></svg>
<div class="a" style="left:1px;top:31px;width:718px;height:160px;border:1px solid #6a6a6a;box-sizing:border-box"></div>
<div class="a" style="left:2px;top:32px;width:716px;height:158px;background:#fff;border-style:solid;border-width:2px 2px 1px 2px;border-color:#8a8a8a #f0f0f0 #f0f0f0 #8a8a8a;box-sizing:border-box;overflow:hidden">
<div class="a" style="left:0;top:31px;width:712px;height:1px;background:#ececf0"></div>
<div class="a" style="left:0;top:45px;width:712px;height:1px;background:#ececf0"></div>
<div class="a" style="left:0;top:59px;width:712px;height:1px;background:#ececf0"></div>
<div class="a" style="left:0;top:73px;width:712px;height:1px;background:#ececf0"></div>
<div class="a" style="left:0;top:87px;width:712px;height:1px;background:#ececf0"></div>
<div class="a" style="left:0;top:101px;width:712px;height:1px;background:#ececf0"></div>
<div class="a" style="left:0;top:115px;width:712px;height:1px;background:#ececf0"></div>
<div class="a" style="left:0;top:129px;width:712px;height:1px;background:#ececf0"></div>
<div class="a" style="left:139px;top:17px;width:1px;height:122px;background:#ececf0"></div>
<div class="a" style="left:255px;top:17px;width:1px;height:122px;background:#ececf0"></div>
<div class="a" style="left:342px;top:17px;width:1px;height:122px;background:#ececf0"></div>
<div class="a" style="left:458px;top:17px;width:1px;height:122px;background:#ececf0"></div>
<div class="a" style="left:558px;top:17px;width:1px;height:122px;background:#ececf0"></div>
<div class="a" style="left:628px;top:17px;width:1px;height:122px;background:#ececf0"></div>
<div class="a" style="left:699px;top:17px;width:1px;height:122px;background:#ececf0"></div>
<div class="a" style="left:0;top:0;width:712px;height:17px;background:#f0f0f0;border-bottom:2px solid #7d7d7d;box-sizing:border-box;box-shadow:inset 0 1px 0 #fff"></div>
<div class="a" style="left:137px;top:0;width:2px;height:17px;background:#7d7d7d"></div>
<div class="a" style="left:139px;top:1px;width:1px;height:14px;background:#fff"></div>
<div class="a" style="left:253px;top:0;width:2px;height:17px;background:#7d7d7d"></div>
<div class="a" style="left:255px;top:1px;width:1px;height:14px;background:#fff"></div>
<div class="a" style="left:340px;top:0;width:2px;height:17px;background:#7d7d7d"></div>
<div class="a" style="left:342px;top:1px;width:1px;height:14px;background:#fff"></div>
<div class="a" style="left:456px;top:0;width:2px;height:17px;background:#7d7d7d"></div>
<div class="a" style="left:458px;top:1px;width:1px;height:14px;background:#fff"></div>
<div class="a" style="left:556px;top:0;width:2px;height:17px;background:#7d7d7d"></div>
<div class="a" style="left:558px;top:1px;width:1px;height:14px;background:#fff"></div>
<div class="a" style="left:626px;top:0;width:2px;height:17px;background:#7d7d7d"></div>
<div class="a" style="left:628px;top:1px;width:1px;height:14px;background:#fff"></div>
<div class="a" style="left:697px;top:0;width:2px;height:17px;background:#7d7d7d"></div>
<div class="a" style="left:699px;top:1px;width:1px;height:14px;background:#fff"></div>
<div class="a d" style="left:6.5px;top:2.8px;transform:scaleX(0.9021);transform-origin:0 0" id="gh0">Typ dokumentu</div>
<div class="a d" style="left:145.0px;top:2.8px;transform:scaleX(0.8875);transform-origin:0 0" id="gh1">Data wystawienia</div>
<div class="a d" style="left:260.7px;top:2.8px;transform:scaleX(0.9170);transform-origin:0 0" id="gh2">Pozostało</div>
<div class="a d" style="left:348.6px;top:2.8px;transform:scaleX(0.8799);transform-origin:0 0" id="gh3">Ostatnio wystawiona</div>
<div class="a d" style="left:463.8px;top:2.8px;transform:scaleX(0.7978);transform-origin:0 0" id="gh4">Firma</div>
<div class="a d" style="left:564.4px;top:2.8px;transform:scaleX(0.9061);transform-origin:0 0" id="gh5">Wartość</div>
<div class="a d" style="left:633.2px;top:2.8px;transform:scaleX(0.9422);transform-origin:0 0" id="gh6">Płatność</div>
<div class="a d" style="left:705px;top:2.8px" id="gh7">C</div>
<div class="a" style="left:0;top:139px;width:712px;height:17px;background:#f0f0f0"></div>
<div class="a" style="left:17px;top:139px;width:541px;height:17px;background:#cdcdcd"></div>
<svg class="a" style="left:5px;top:143px" width="6" height="8" viewBox="0 0 6 8"><path d="M5 .6L1.400 4 5 7.400" fill="none" stroke="#555" stroke-width="1.700"/></svg>
<svg class="a" style="left:701px;top:143px" width="6" height="8" viewBox="0 0 6 8"><path d="M1 .6L4.600 4 1 7.400" fill="none" stroke="#555" stroke-width="1.700"/></svg>
</div>
<svg class="a" style="left:1px;top:195px" width="540" height="24" viewBox="0 0 540 24" fill="none" stroke="#a6a6a6" stroke-width="1"><path d="M158 5.500 q2-4 6-4h70q4.500 0 6.500 4l4.500 9q2 4 5 4H532.500v4"/><path d="M0 18.500h2q3 0 5-4l5-9q2-4 6-4h131q4 0 6 4l4.500 9q2 4 5 4" fill="#f0f0f0"/></svg>
<div class="a" style="left:18.0px;top:199.4px;font-size:12px;font-weight:bold;color:#000;line-height:13px;transform:scaleX(0.9835);transform-origin:0 0" id="tb0">Wygenerowane Faktury</div>
<div class="a d" style="left:164.0px;top:199.4px;transform:scaleX(0.8732);transform-origin:0 0" id="tb1">Pozycje Faktury</div>
<div class="a" style="left:11px;top:225px;width:516px;height:118px;border:1px solid #6a6a6a;box-sizing:border-box"></div>
<div class="a" style="left:12px;top:226px;width:514px;height:116px;background:#fff;border-style:solid;border-width:2px 1px 1px 2px;border-color:#8a8a8a #f0f0f0 #f0f0f0 #8a8a8a;box-sizing:border-box;overflow:hidden">
<div class="a" style="left:0;top:31px;width:512px;height:1px;background:#ececf0"></div>
<div class="a" style="left:0;top:45px;width:512px;height:1px;background:#ececf0"></div>
<div class="a" style="left:0;top:59px;width:512px;height:1px;background:#ececf0"></div>
<div class="a" style="left:0;top:73px;width:512px;height:1px;background:#ececf0"></div>
<div class="a" style="left:0;top:87px;width:512px;height:1px;background:#ececf0"></div>
<div class="a" style="left:0;top:101px;width:512px;height:1px;background:#ececf0"></div>
<div class="a" style="left:80px;top:17px;width:1px;height:100px;background:#ececf0"></div>
<div class="a" style="left:240px;top:17px;width:1px;height:100px;background:#ececf0"></div>
<div class="a" style="left:320px;top:17px;width:1px;height:100px;background:#ececf0"></div>
<div class="a" style="left:400px;top:17px;width:1px;height:100px;background:#ececf0"></div>
<div class="a" style="left:496px;top:17px;width:1px;height:100px;background:#ececf0"></div>
<div class="a" style="left:0;top:0;width:512px;height:17px;background:#f0f0f0;border-bottom:2px solid #7d7d7d;box-sizing:border-box;box-shadow:inset 0 1px 0 #fff"></div>
<div class="a" style="left:78px;top:0;width:2px;height:17px;background:#7d7d7d"></div>
<div class="a" style="left:80px;top:1px;width:1px;height:14px;background:#fff"></div>
<div class="a" style="left:238px;top:0;width:2px;height:17px;background:#7d7d7d"></div>
<div class="a" style="left:240px;top:1px;width:1px;height:14px;background:#fff"></div>
<div class="a" style="left:318px;top:0;width:2px;height:17px;background:#7d7d7d"></div>
<div class="a" style="left:320px;top:1px;width:1px;height:14px;background:#fff"></div>
<div class="a" style="left:398px;top:0;width:2px;height:17px;background:#7d7d7d"></div>
<div class="a" style="left:400px;top:1px;width:1px;height:14px;background:#fff"></div>
<div class="a" style="left:494px;top:0;width:2px;height:17px;background:#7d7d7d"></div>
<div class="a" style="left:496px;top:1px;width:1px;height:14px;background:#fff"></div>
<div class="a d" style="left:5.0px;top:2.8px;transform:scaleX(0.9417);transform-origin:0 0" id="ih0">Data</div>
<div class="a d" style="left:85.0px;top:2.8px;transform:scaleX(0.9266);transform-origin:0 0" id="ih1">Nazwa</div>
<div class="a d" style="left:245.0px;top:2.8px;transform:scaleX(0.8448);transform-origin:0 0" id="ih2">Firma</div>
<div class="a d" style="left:326.0px;top:2.8px;transform:scaleX(0.8679);transform-origin:0 0" id="ih3">Adres</div>
<div class="a d" style="left:406.0px;top:2.8px;transform:scaleX(0.9419);transform-origin:0 0" id="ih4">Wartość</div>
</div>
<div class="a d" style="left:24.6px;top:349.0px;transform:scaleX(0.9074);transform-origin:0 0" id="zk">Zakres faktur : od</div>
<div class="a" style="left:129px;top:348px;width:112px;height:23px;background:#f0f0f0;border-style:solid;border-width:2px 1px 1px 2px;border-color:#8c8c8c #f0f0f0 #f0f0f0 #8c8c8c;box-sizing:border-box"></div><div class="a d" style="left:133.5px;top:352.6px;color:#757575;transform:scaleX(0.8776);transform-origin:0 0" id="d1">09-11-2022</div><div class="a" style="left:224px;top:351px;width:16px;height:19px;background:#f0f0f0;border:1px solid #fff;border-right-color:#8e8e8e;border-bottom-color:#8e8e8e;box-sizing:border-box"></div><svg class="a" style="left:228px;top:359px" width="7" height="4" viewBox="0 0 7 4"><path d="M0 0h7L3.500 4z" fill="#9a9a9a"/></svg>
<div class="a d" style="left:250.2px;top:349.0px;transform:scaleX(0.8100);transform-origin:0 0" id="do">do</div>
<div class="a" style="left:273px;top:348px;width:112px;height:23px;background:#f0f0f0;border-style:solid;border-width:2px 1px 1px 2px;border-color:#8c8c8c #f0f0f0 #f0f0f0 #8c8c8c;box-sizing:border-box"></div><div class="a d" style="left:277.6px;top:352.6px;color:#757575;transform:scaleX(0.8776);transform-origin:0 0" id="d2">09-11-2022</div><div class="a" style="left:368px;top:351px;width:16px;height:19px;background:#f0f0f0;border:1px solid #fff;border-right-color:#8e8e8e;border-bottom-color:#8e8e8e;box-sizing:border-box"></div><svg class="a" style="left:372px;top:359px" width="7" height="4" viewBox="0 0 7 4"><path d="M0 0h7L3.500 4z" fill="#9a9a9a"/></svg>
<div class="a cb" style="left:401px;top:354px"></div>
<div class="a d" style="left:417.4px;top:355.0px;transform:scaleX(0.9293);transform-origin:0 0" id="wf">Włącz filtr</div>
<div class="a gb" style="left:535px;top:199px;width:184px;height:169px"></div>
<div class="a d gl" style="left:543.0px;top:193.7px;transform:scaleX(0.8637);transform-origin:0 0" id="fw">Filtrowanie wzorca</div>
<div class="a d" style="left:542.7px;top:209.8px;transform:scaleX(0.8467);transform-origin:0 0" id="fl1">Firma</div>
<div class="a" style="left:543px;top:225px;width:161px;height:21px;background:#fff;border:1px solid #6e6e6e;box-sizing:border-box;box-shadow:inset 1px 1px 0 #8a8a8a"></div><div class="a" style="left:684px;top:228px;width:17px;height:16px;background:#dedede;border:1px solid #fdfdfd;border-right-color:#8a8a8a;border-bottom-color:#8a8a8a;box-sizing:border-box;"></div><svg class="a" style="left:688.5px;top:234px" width="8" height="4" viewBox="0 0 8 4"><path d="M0 0h8L4 4z" fill="#000"/></svg>
<div class="a d" style="left:544.1px;top:249.7px;transform:scaleX(0.8732);transform-origin:0 0" id="fl2">Termin</div>
<div class="a" style="left:543px;top:265px;width:161px;height:21px;background:#fff;border:1px solid #6e6e6e;box-sizing:border-box;box-shadow:inset 1px 1px 0 #8a8a8a"></div><div class="a" style="left:684px;top:268px;width:17px;height:16px;background:#dedede;border:1px solid #fdfdfd;border-right-color:#8a8a8a;border-bottom-color:#8a8a8a;box-sizing:border-box;"></div><svg class="a" style="left:688.5px;top:274px" width="8" height="4" viewBox="0 0 8 4"><path d="M0 0h8L4 4z" fill="#000"/></svg>
<div class="a cb" style="left:543px;top:299px"></div>
<div class="a d" style="left:559.3px;top:299.3px;transform:scaleX(0.8859);transform-origin:0 0" id="ay">Aktywny</div>
<div class="a btn" style="left:623px;top:292px;width:89px;height:25px"></div>
<div class="a d" style="left:654.5px;top:298.9px;transform:scaleX(0.8748);transform-origin:0 0" id="b1">Filtruj</div>
<div class="a btn" style="left:623px;top:326px;width:89px;height:25px"></div>
<div class="a d" style="left:636.0px;top:333.0px;transform:scaleX(0.8754);transform-origin:0 0" id="b2">Wyczysc Filtr</div>
<div class="a gb" style="left:0px;top:382px;width:337px;height:58px;border-left:none"></div>
<div class="a d gl" style="left:8.0px;top:376.1px;transform:scaleX(0.8882);transform-origin:0 0" id="df">Definiowanie wzorca faktury</div>
<div class="a btn" style="left:9px;top:400px;width:97px;height:25px"></div>
<div class="a btn" style="left:121px;top:400px;width:89px;height:25px"></div>
<div class="a btn" style="left:225px;top:400px;width:97px;height:25px"></div>
<svg class="a" style="left:31.5px;top:404px" width="17" height="17" viewBox="0 0 17 17"><path d="M.5.500h8l3.500 3.500v11.500h-11.500z" fill="#fbfbfb" stroke="#a4a9ae"/><path d="M8.500.5v3.500h3.500" fill="#e8e8e8" stroke="#a4a9ae"/><path d="M2.500 4.500h4M2.500 7h7M2.500 9.500h7M2.500 12h5" stroke="#9aa" stroke-dasharray="1.200 .8"/><path d="M10.500 7.500h2.500v2.500h3v2.500h-3v3h-2.500v-3h-3v-2.500h3z" fill="#52c64e" stroke="#1f8a1c" stroke-width=".9"/></svg>
<div class="a d" style="left:50.9px;top:407.3px;transform:scaleX(0.9111);transform-origin:0 0" id="b3">Dodaj</div>
<svg class="a" style="left:141.8px;top:404px" width="17" height="17" viewBox="0 0 17 17"><path d="M.5.500h8l3.500 3.500v11.500h-11.500z" fill="#fbfbfb" stroke="#a4a9ae"/><path d="M8.500.5v3.500h3.500" fill="#e8e8e8" stroke="#a4a9ae"/><path d="M2.500 4.500h4M2.500 7h7M2.500 9.500h7M2.500 12h5" stroke="#9aa" stroke-dasharray="1.200 .8"/><rect x="6.500" y="10" width="10" height="3.500" rx="1" fill="#ee5040" stroke="#b3261a" stroke-width=".9"/></svg>
<div class="a d" style="left:160.2px;top:407.3px;transform:scaleX(0.9500);transform-origin:0 0" id="b4">Usuń</div>
<svg class="a" style="left:248px;top:402px" width="18" height="19" viewBox="0 0 18 19"><path d="M1.500 3.500h8l3 3v11h-11z" fill="#fbfbfb" stroke="#a4a9ae"/><path d="M14.300 1.200l2.500 2.500L8 12.700l-3.800 1.300 1.300-3.800z" fill="#7f9be0" stroke="#4666b8" stroke-width=".9"/><path d="M4.200 14l1.300-3.800 2.500 2.500z" fill="#e8d8b0"/><path d="M3 16.500h7" stroke="#aaa"/></svg>
<div class="a d" style="left:267.8px;top:407.3px;transform:scaleX(0.9043);transform-origin:0 0" id="b5">Edytuj</div>
<div class="a gb" style="left:353px;top:382px;width:352px;height:89px"></div>
<div class="a d gl" style="left:359.9px;top:376.1px;transform:scaleX(0.8941);transform-origin:0 0" id="wy">Wystawianie faktur</div>
<div class="a cb" style="left:361px;top:394px"></div>
<div class="a d" style="left:376.8px;top:395.0px;transform:scaleX(0.8888);transform-origin:0 0" id="c0">Ekportuj do PDF</div>
<div class="a cb" style="left:361px;top:410px"></div>
<div class="a d" style="left:377.2px;top:410.8px;transform:scaleX(0.8847);transform-origin:0 0" id="c1">Automatyczne drukowanie</div>
<div class="a cb" style="left:361px;top:426px"></div>
<div class="a d" style="left:377.8px;top:426.7px;transform:scaleX(0.8917);transform-origin:0 0" id="c2">podatnik zwolniony z VAT</div>
<div class="a" style="left:466px;top:400px;width:2px;height:1px;background:#222"></div>
<div class="a btn" style="left:673px;top:392px;width:25px;height:17px"></div>
<svg class="a" style="left:677px;top:393px" width="17" height="15" viewBox="0 0 17 15"><path d="M1.500 4.500h4l1 1.500h6v7.500h-11z" fill="#e2b840" stroke="#a88420" stroke-width=".9"/><path d="M1.200 13.500l2.500-6h12l-3 6z" fill="#f8dc78" stroke="#b08c24" stroke-width=".9"/><path d="M9.500 3q3-2.500 5 .3" fill="none" stroke="#777" stroke-width="1"/><path d="M15.600 1.200l-.2 2.900-2.400-1z" fill="#777"/></svg>
<div class="a btn" style="left:473px;top:444px;width:121px;height:24px"></div>
<div class="a d" style="left:495.0px;top:449.8px;transform:scaleX(0.8962);transform-origin:0 0" id="b6">Wystaw Fakturę</div>
<div class="a btn" style="left:300px;top:479px;width:121px;height:24px"></div>
<div class="a d" style="left:345.8px;top:485.4px;transform:scaleX(0.9056);transform-origin:0 0" id="b7">Anuluj</div>
<div class="a" style="left:1px;top:506px;width:718px;height:11px;background:#f0f0f0;border-top:2px solid #6e6e6e;border-left:2px solid #8a8a8a;box-sizing:border-box"></div>
<div class="a" style="left:0;top:0;width:721px;height:518.500px;border:1px solid #9a9a9a;border-right-color:#a8a8a8;border-bottom-color:#a8a8a8;box-sizing:border-box"></div>
</div>
<!--/DLG-->
</body></html>
